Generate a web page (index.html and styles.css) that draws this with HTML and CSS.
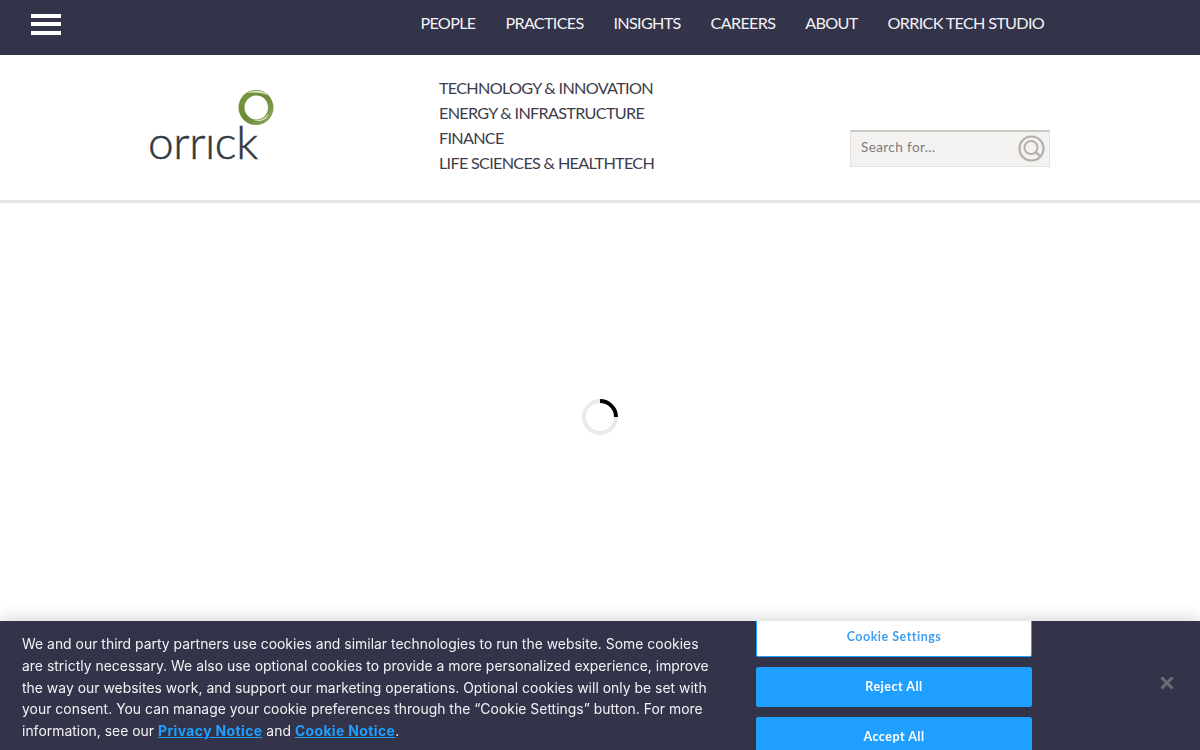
FILE: index.html
```html
<!DOCTYPE html>
<html lang="en">
<head>
<meta charset="utf-8">
<title>Orrick</title>
<link rel="stylesheet" href="styles.css">
</head>
<body>
<header class="topbar">
  <button class="burger" aria-label="Menu"><span></span><span></span><span></span></button>
  <nav class="topnav">
    <a href="#">PEOPLE</a>
    <a href="#">PRACTICES</a>
    <a href="#">INSIGHTS</a>
    <a href="#">CAREERS</a>
    <a href="#">ABOUT</a>
    <a href="#">ORRICK TECH STUDIO</a>
  </nav>
</header>
<section class="masthead">
  <a class="logo" href="#" aria-label="orrick">
    <svg class="logo-ring" width="36" height="36" viewBox="0 0 36 36" aria-hidden="true">
      <defs>
        <linearGradient id="ringGrad" x1="0" y1="0" x2="1" y2="1">
          <stop offset="0" stop-color="#7a9a42"/>
          <stop offset="0.5" stop-color="#6a8a37"/>
          <stop offset="1" stop-color="#93ad63"/>
        </linearGradient>
      </defs>
      <path fill="url(#ringGrad)" fill-rule="evenodd" d="M18 0C27.700 0 35.500 7.800 35.500 17.500 35.500 27.200 27.700 35 18 35 8.300 35 0.500 27.200 0.500 17.500 0.500 7.800 8.300 0 18 0ZM18.500 5.500C11.800 5.500 6.500 10.800 6.500 17.500 6.500 24.200 11.800 29.500 18.500 29.500 25.200 29.500 30 24.200 30 17.500 30 10.800 25.200 5.500 18.500 5.500Z"/>
      <path fill="#dfe6cf" d="M9 3C15 -0.300 24 -0.200 30.500 5.500 24 2.500 16 2 9 3ZM15 29.500C21 31.500 27 29 30.500 23.500 29.500 29.500 21.500 33.500 15 29.500Z"/>
    </svg>
    <span class="logo-word">orrıck</span>
  </a>
  <ul class="subnav">
    <li><a href="#">TECHNOLOGY &amp; INNOVATION</a></li>
    <li><a href="#">ENERGY &amp; INFRASTRUCTURE</a></li>
    <li><a href="#">FINANCE</a></li>
    <li><a href="#">LIFE SCIENCES &amp; HEALTHTECH</a></li>
  </ul>
  <form class="search">
    <span class="search-text">Search for...</span>
    <svg class="search-icon" width="27" height="27" viewBox="0 0 27 27" aria-hidden="true">
      <circle cx="13.500" cy="13.500" r="12" fill="none" stroke="#b3aea8" stroke-width="2.200"/>
      <circle cx="13" cy="12.500" r="6.500" fill="none" stroke="#b3aea8" stroke-width="2"/>
      <path d="M17.500 17l3.800 3.300" stroke="#b3aea8" stroke-width="2.400" stroke-linecap="round"/>
    </svg>
  </form>
</section>
<main class="content">
  <div class="spinner"></div>
</main>
<aside class="cookie">
  <p class="cookie-text">We and our third party partners use cookies and similar technologies to run the website. Some cookies are strictly necessary. We also use optional cookies to provide a more personalized experience, improve the way our websites work, and support our marketing operations. Optional cookies will only be set with your consent. You can manage your cookie preferences through the “Cookie Settings” button. For more information, see our <a href="#">Privacy Notice</a> and <a href="#">Cookie Notice</a>.</p>
  <div class="cookie-actions">
    <button class="btn btn-outline">Cookie Settings</button>
    <button class="btn">Reject All</button>
    <button class="btn">Accept All</button>
  </div>
  <button class="cookie-close" aria-label="Close">
    <svg width="14" height="14" viewBox="0 0 14 14" aria-hidden="true"><path d="M1.500 1.500l11 11M12.500 1.500l-11 11" stroke="#6b6b72" stroke-width="3"/></svg>
  </button>
</aside>
</body>
</html>
```
FILE: styles.css
```css
* { box-sizing: border-box; }
html, body { margin: 0; height: 100%; overflow: hidden; background: #fff; }
body { font-family: "Lato", "Liberation Sans", sans-serif; }
a { text-decoration: none; color: inherit; }

.topbar {
  height: 55px;
  background: #33344a;
  display: flex;
  align-items: center;
  justify-content: space-between;
  padding: 0 156px 7px 31px;
}
.burger {
  width: 30px; height: 21px; padding: 0; border: 0; background: none;
  display: flex; flex-direction: column; justify-content: space-between;
}
.burger span { display: block; height: 4px; background: #fff; }
.topnav { display: flex; gap: 30px; margin-top: -2px; }
.topnav a { color: #f3f3f5; font-size: 16.200px; line-height: 24px; letter-spacing: -0.7px; }

.masthead {
  height: 148px;
  border-bottom: 3px solid #e6e6e6;
  padding: 0 150px;
  display: flex;
  position: relative;
}
.logo { width: 289px; position: relative; display: block; }
.logo-word {
  position: absolute; left: -2px; top: 59px;
  font-size: 46px; line-height: 56px; font-weight: 300; color: #343a42; letter-spacing: -0.4px;
  -webkit-text-stroke: 0.5px #343a42;
}
.logo-ring { position: absolute; left: 88px; top: 35px; }
.subnav { list-style: none; margin: 20px 0 0; padding: 0; width: 411px; }
.subnav li { height: 25px; line-height: 25px; font-size: 16.200px; color: #3c3c4c; letter-spacing: -0.7px; }
.search {
  width: 200px; height: 37px; margin-top: 75px;
  background: #f3f2f0;
  border: 1px solid #e4e2df; border-top: 2px solid #cbc7c2;
  display: flex; align-items: center; justify-content: space-between;
  padding: 0 4px 0 10px;
}
.search-text { font-size: 13.500px; letter-spacing: 0.4px; color: #7d7a78; margin-top: -4px; }
.search-icon { margin-top: -2px; }

.content {
  height: 418px;
  display: flex; align-items: flex-start; justify-content: center;
  padding-top: 196px;
}
.spinner {
  width: 36px; height: 36px; border-radius: 50%;
  border: 4px solid #eaeaea;
  border-top-color: #000;
  transform: rotate(45deg);
}

.cookie {
  position: fixed; left: 0; right: 0; bottom: 0; height: 129px;
  background: #33344a;
  box-shadow: 0 0 18px rgba(0,0,0,.2);
  display: flex;
  overflow: hidden;
  color: #f2f2f4;
}
.cookie-text {
  margin: 13px 0 0 22px; width: 690px;
  font-family: "Inter", "Liberation Sans", sans-serif;
  font-size: 13.900px; line-height: 21.800px; letter-spacing: 0.025px;
}
.cookie-text a { color: #1f9fff; font-weight: 700; text-decoration: underline; letter-spacing: 0.4px; }
.cookie-actions {
  margin: -4px 0 0 44px; width: 276px; flex: none;
  display: flex; flex-direction: column; gap: 10px;
}
.btn {
  height: 40px; flex: none; border: 1px solid #1f9fff; border-radius: 2px;
  background: #1f9fff; color: #fff; padding: 0 0 2px;
  font-family: "Lato", "Liberation Sans", sans-serif; font-size: 12.500px; font-weight: 700; letter-spacing: 0.5px;
}
.btn-outline { background: #fff; color: #3f9fee; }
.cookie-close {
  position: absolute; left: 1160px; top: 55px; padding: 0; border: 0; background: none;
  width: 14px; height: 14px; display: flex;
}
```
